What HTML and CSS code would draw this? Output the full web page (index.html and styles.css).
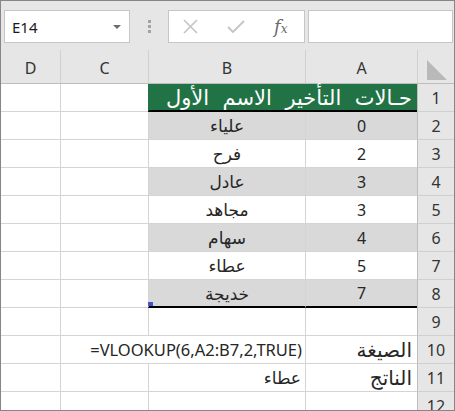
FILE: index.html
```html
<!DOCTYPE html>
<html lang="ar">
<head>
    <meta charset="UTF-8">
    <title>VLOOKUP</title>
    <link rel="stylesheet" href="styles.css">
</head>
<body>
    <div class="excel">
        <div class="toolbar">
            <div class="name-box">
                <span>E14</span>
                <svg class="caret" width="8" height="4" viewBox="0 0 8 4"><polygon points="0,0 8,0 4,4" fill="#6d6d6d"/></svg>
            </div>
            <div class="grip"><i></i><i></i><i></i></div>
            <div class="fx-buttons">
                <svg width="15" height="15" viewBox="0 0 15 15"><path d="M1 1 L14 14 M14 1 L1 14" stroke="#c4c4c4" stroke-width="1.6" fill="none"/></svg>
                <svg width="18" height="13" viewBox="0 0 18 13"><path d="M1 7 L6 12 L17 1" stroke="#c4c4c4" stroke-width="1.8" fill="none"/></svg>
                <span class="fx">f<small>x</small></span>
            </div>
            <div class="formula-input"></div>
        </div>

        <div class="sheet" dir="rtl">
            <!-- column headers -->
            <div class="corner"><svg width="20" height="20" viewBox="0 0 20 20"><polygon points="0,0 0,20 20,20" fill="#b9b9b9"/></svg></div>
            <div class="ch">A</div>
            <div class="ch">B</div>
            <div class="ch">C</div>
            <div class="ch d">D</div>

            <!-- 1 -->
            <div class="rh">1</div>
            <div class="c green wide">حـالات التأخير الاسم الأول</div>
            <div class="c"></div>
            <div class="c d"></div>

            <!-- 2 -->
            <div class="rh">2</div>
            <div class="c band mid">0</div>
            <div class="c band mid ar">علياء</div>
            <div class="c"></div>
            <div class="c d"></div>

            <!-- 3 -->
            <div class="rh">3</div>
            <div class="c mid">2</div>
            <div class="c mid ar">فرح</div>
            <div class="c"></div>
            <div class="c d"></div>

            <!-- 4 -->
            <div class="rh">4</div>
            <div class="c band mid">3</div>
            <div class="c band mid ar">عادل</div>
            <div class="c"></div>
            <div class="c d"></div>

            <!-- 5 -->
            <div class="rh">5</div>
            <div class="c mid">3</div>
            <div class="c mid ar">مجاهد</div>
            <div class="c"></div>
            <div class="c d"></div>

            <!-- 6 -->
            <div class="rh">6</div>
            <div class="c band mid">4</div>
            <div class="c band mid ar">سهام</div>
            <div class="c"></div>
            <div class="c d"></div>

            <!-- 7 -->
            <div class="rh">7</div>
            <div class="c mid">5</div>
            <div class="c mid ar">عطاء</div>
            <div class="c"></div>
            <div class="c d"></div>

            <!-- 8 -->
            <div class="rh">8</div>
            <div class="c band mid last">7</div>
            <div class="c band mid last handle ar">خديجة</div>
            <div class="c"></div>
            <div class="c d"></div>

            <!-- 9 -->
            <div class="rh">9</div>
            <div class="c"></div>
            <div class="c"></div>
            <div class="c"></div>
            <div class="c d"></div>

            <!-- 10 -->
            <div class="rh">10</div>
            <div class="c label">الصيغة</div>
            <div class="c wide formula"><span dir="ltr">=VLOOKUP(6,A2:B7,2,TRUE)</span></div>
            <div class="c d"></div>

            <!-- 11 -->
            <div class="rh">11</div>
            <div class="c label">الناتج</div>
            <div class="c ar">عطاء</div>
            <div class="c"></div>
            <div class="c d"></div>

            <!-- 12 -->
            <div class="rh">12</div>
            <div class="c"></div>
            <div class="c"></div>
            <div class="c"></div>
            <div class="c d"></div>
        </div>
    </div>
</body>
</html>
```

FILE: styles.css
```css
:root {
    --chrome: #e6e6e6;
    --box-line: #c6c6c6;
    --grid: #d4d4d4;
    --green: #217346;
    --band: #d9d9d9;
    --text: #262626;
}

* {
    margin: 0;
    padding: 0;
    box-sizing: border-box;
}

body {
    font-family: "Noto Sans", "DejaVu Sans", sans-serif;
    color: var(--text);
}

.excel {
    width: 455px;
    height: 411px;
    border: 1px solid #868686;
    background: var(--chrome);
    overflow: hidden;
}

/* formula bar */
.toolbar {
    height: 49px;
    display: flex;
    align-items: flex-start;
    padding: 9px 1px 0 3px;
}

.name-box {
    width: 126px;
    height: 33px;
    background: #fff;
    border: 1px solid var(--box-line);
    display: flex;
    align-items: center;
    justify-content: space-between;
    padding: 0 8px 0 7px;
    font-size: 15px;
    color: #1a1a1a;
}

.grip {
    width: 38px;
    height: 33px;
    display: flex;
    flex-direction: column;
    align-items: center;
    justify-content: center;
    gap: 2px;
}

.grip i {
    width: 3px;
    height: 3px;
    background: #a3a3a3;
}

.fx-buttons {
    width: 137px;
    height: 33px;
    background: #fff;
    border: 1px solid var(--box-line);
    display: flex;
    align-items: center;
    padding-left: 14px;
    gap: 29px;
}

.fx {
    font-family: "DejaVu Serif", "Liberation Serif", serif;
    font-style: italic;
    font-size: 18px;
    color: #6b6b6b;
}

.fx small {
    font-size: 12px;
}

.formula-input {
    flex: 1;
    height: 33px;
    margin-left: 3px;
    background: #fff;
    border: 1px solid var(--box-line);
}

/* grid */
.sheet {
    display: grid;
    grid-template-columns: 37px 112px 157px 88px 59px;
    grid-template-rows: 34px repeat(12, 28px);
    font-size: 16px;
}

.corner,
.ch,
.rh {
    background: var(--chrome);
    display: flex;
    align-items: center;
    justify-content: center;
    color: #333;
}

.corner {
    border-left: 1px solid #d0d0d0;
    border-bottom: 1px solid #bdbdbd;
    align-items: flex-end;
    justify-content: flex-start;
    padding: 0 4px 3px 0;
}

.corner svg {
    margin-right: 3px;
}

.ch {
    border-left: 1px solid #d0d0d0;
    border-bottom: 1px solid #bdbdbd;
    padding-top: 3px;
}

.ch.d {
    border-left: 0;
}

.rh {
    border-left: 1px solid #bdbdbd;
    border-bottom: 1px solid #cfcfcf;
    font-size: 16px;
}

.c {
    background: #fff;
    border-left: 1px solid var(--grid);
    border-bottom: 1px solid var(--grid);
    display: flex;
    align-items: center;
    padding: 0 4px;
    white-space: nowrap;
    overflow: visible;
}

.c.d {
    border-left: 0;
}

.c.wide {
    grid-column: span 2;
}

.c.mid {
    justify-content: center;
}

.c.ar {
    font-size: 17px;
}

.c.label {
    font-size: 20px;
    padding-right: 5px;
}

.c.formula {
    font-size: 16.5px;
    padding-right: 3px;
}

.c.band {
    background: var(--band);
}

.c.green {
    background: var(--green);
    border-left-color: var(--green);
    border-bottom: 2px solid #000;
    color: #fff;
    font-size: 21px;
    word-spacing: 8px;
    padding-right: 5px;
}

.c.last {
    border-bottom: 2px solid #000;
}

.c.handle {
    position: relative;
}

.c.handle::after {
    content: "";
    position: absolute;
    left: -1px;
    bottom: 0;
    width: 5px;
    height: 4px;
    background: #3f57c3;
}
```
